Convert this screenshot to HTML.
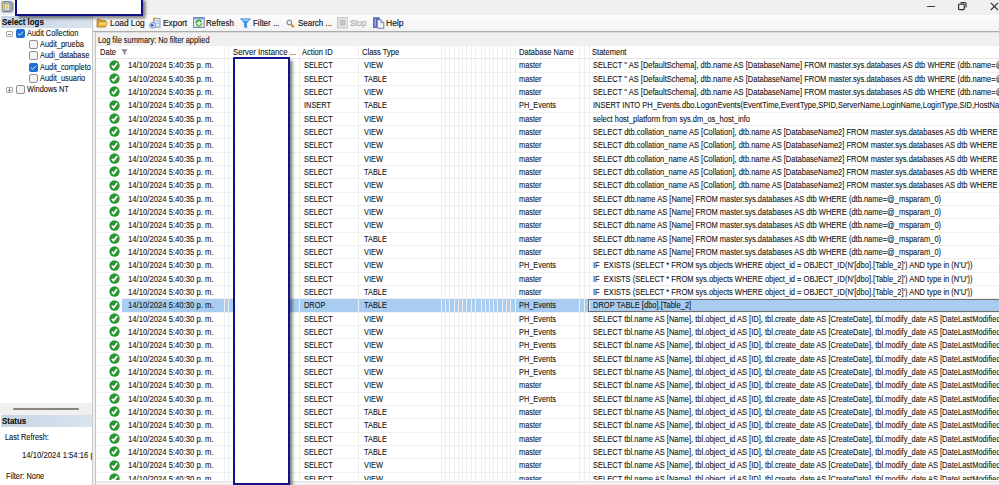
<!DOCTYPE html><html><head><meta charset="utf-8"><style>
*{box-sizing:border-box;margin:0;padding:0}
html,body{width:999px;height:485px;overflow:hidden;background:#f0f0f0;font-family:"Liberation Sans", sans-serif;color:#1e1e1e}
.a{position:absolute}
.t{position:absolute;white-space:pre;font-size:9px;line-height:10px;transform:scaleX(.82);transform-origin:0 0;color:#141414;-webkit-text-stroke-width:0.1px}
.d{transform:scaleX(.855)}
.s{transform:scaleX(.835)}
.tb{position:absolute;white-space:nowrap;font-size:9px;line-height:10px;color:#141414;transform:scaleX(.885);transform-origin:0 0;-webkit-text-stroke-width:0.15px}
</style></head><body><div class="a" style="left:0;top:0;width:999px;height:15px;background:#eff0f2"></div>
<svg class="a" style="left:0;top:0" width="15" height="14" viewBox="0 0 15 14">
<path d="M2.6 1.8 H10.6 L12.8 3.2 V10.6 L11.4 11.8 H2.6 Z" fill="#dfe7f2" stroke="#4f5d78" stroke-width="1"/>
<path d="M10.2 2.4 L12.2 3.6 V10.4 L10.2 11.2 Z" fill="#9aa7bd"/>
<rect x="4.2" y="3.3" width="5.6" height="6.9" fill="#eef1f7" stroke="#7d889c" stroke-width="0.8"/>
<rect x="5.6" y="4.2" width="2.8" height="4.6" fill="#f2cc4c"/>
<path d="M2 1.5 V12" stroke="#b9cbe6" stroke-width="0.8"/>
<g fill="#e4aa2a"><rect x="1" y="2.8" width="2.2" height="1.1"/><rect x="1" y="4.9" width="2.2" height="1.1"/><rect x="1" y="7" width="2.2" height="1.1"/><rect x="1" y="9.1" width="2.2" height="1.1"/></g>
</svg>
<div class="a" style="left:927px;top:5.5px;width:8px;height:1.2px;background:#3a3a3a"></div>
<svg class="a" style="left:957px;top:1px" width="11" height="10" viewBox="0 0 11 10"><rect x="1.6" y="3.1" width="5.6" height="5.6" rx="1" fill="none" stroke="#2e2e2e" stroke-width="1.2"/><path d="M3.6 1.6 H8 a1 1 0 0 1 1 1 V6.6" fill="none" stroke="#2e2e2e" stroke-width="1.2"/></svg>
<svg class="a" style="left:989px;top:1px" width="10" height="10" viewBox="0 0 10 10"><path d="M1.8 1.8 L9 9 M9 1.8 L1.8 9" stroke="#2e2e2e" stroke-width="1.1"/></svg>
<div class="a" style="left:0;top:15px;width:92px;height:470px;background:#fff"></div>
<div class="a" style="left:1px;top:16px;width:91px;height:12px;background:linear-gradient(90deg,#c6d4e4,#d9e4ef)"></div>
<div class="t" style="left:2.3px;top:16.6px;font-size:9.5px;font-weight:bold;transform:scaleX(.835);color:#0a0a0a">Select logs</div>
<div class="a" style="left:6.3px;top:31.00px;width:6.6px;height:6px;border:1px solid #a8a8a8;border-radius:1px;background:#fafafa"></div>
<div class="a" style="left:7.9px;top:33.50px;width:3.4px;height:1px;background:#7884c4"></div>
<div class="a" style="left:16.3px;top:29.0px;width:9px;height:9px;border-radius:2px;background:#1a6fd0"></div><svg class="a" style="left:16.3px;top:29.0px" width="9" height="9" viewBox="0 0 9 9"><path d="M2 4.6 L3.7 6.2 L7 2.8" fill="none" stroke="#fff" stroke-width="0.9"/></svg>
<div class="t" style="left:27px;top:28.00px">Audit Collection</div>
<div class="a" style="left:29.3px;top:40.2px;width:9px;height:9px;border-radius:1.5px;background:#f3f3f3;border:1px solid #8f8f8f;border-radius:2px"></div>
<div class="t" style="left:40.3px;top:39.20px">Audit_prueba</div>
<div class="a" style="left:29.3px;top:51.4px;width:9px;height:9px;border-radius:1.5px;background:#f3f3f3;border:1px solid #8f8f8f;border-radius:2px"></div>
<div class="t" style="left:40.3px;top:50.40px">Audi_database</div>
<div class="a" style="left:29.3px;top:62.6px;width:9px;height:9px;border-radius:2px;background:#1a6fd0"></div><svg class="a" style="left:29.3px;top:62.6px" width="9" height="9" viewBox="0 0 9 9"><path d="M2 4.6 L3.7 6.2 L7 2.8" fill="none" stroke="#fff" stroke-width="0.9"/></svg>
<div class="t" style="left:40.3px;top:61.60px">Audit_completo</div>
<div class="a" style="left:29.3px;top:73.8px;width:9px;height:9px;border-radius:1.5px;background:#f3f3f3;border:1px solid #8f8f8f;border-radius:2px"></div>
<div class="t" style="left:40.3px;top:72.80px">Audit_usuario</div>
<div class="a" style="left:6.3px;top:87.00px;width:6.6px;height:6px;border:1px solid #a8a8a8;border-radius:1px;background:#fafafa"></div>
<div class="a" style="left:7.9px;top:89.50px;width:3.4px;height:1px;background:#7884c4"></div>
<div class="a" style="left:9.1px;top:88.20px;width:1px;height:3.4px;background:#7884c4"></div>
<div class="a" style="left:16.3px;top:85.0px;width:9px;height:9px;border-radius:1.5px;background:#f3f3f3;border:1px solid #8f8f8f;border-radius:2px"></div>
<div class="t" style="left:27px;top:84.00px">Windows NT</div>
<div class="a" style="left:0;top:403px;width:92px;height:12px;background:#f0f0f0"></div>
<div class="a" style="left:13px;top:408.3px;width:66px;height:1.5px;background:#858585;border-radius:1px"></div>
<div class="a" style="left:1px;top:415px;width:91px;height:12px;background:linear-gradient(90deg,#c6d4e4,#d9e4ef)"></div>
<div class="t" style="left:2.4px;top:415.6px;font-size:9.5px;font-weight:bold;transform:scaleX(.835);color:#0a0a0a">Status</div>
<div class="t" style="left:4.5px;top:432px">Last Refresh:</div>
<div class="a" style="left:0;top:445px;width:92px;height:20px;overflow:hidden"><div class="t d" style="left:21.5px;top:4.5px">14/10/2024 1:54:16 p. m.</div></div>
<div class="t" style="left:5.7px;top:471px">Filter: None</div>
<div class="a" style="left:92px;top:15px;width:1px;height:470px;background:#c9c9c9"></div>
<div class="a" style="left:93px;top:15px;width:906px;height:17px;background:linear-gradient(#fcfcfc,#f3f3f3)"></div>
<div class="a" style="left:93px;top:31.3px;width:906px;height:1.2px;background:#acacac"></div>
<svg class="a" style="left:95.5px;top:18px" width="12" height="10" viewBox="0 0 12 10"><defs><linearGradient id="fg" x1="0" y1="0" x2="0" y2="1"><stop offset="0" stop-color="#ffe98a"/><stop offset="1" stop-color="#e9a81c"/></linearGradient></defs><path d="M1 1.2 H4 L5 2.3 H9.3 V8.8 H1 Z" fill="#d9a23a" stroke="#9a6a14" stroke-width="0.6"/><path d="M3 4 H11.5 L9.5 9 H0.8 Z" fill="url(#fg)" stroke="#a87216" stroke-width="0.6"/></svg>
<div class="tb" style="left:109.5px;top:17.5px;transform:scaleX(.925)">Load Log</div>
<svg class="a" style="left:149px;top:17px" width="12" height="12" viewBox="0 0 12 12"><rect x="4.6" y="1.3" width="6.4" height="8.8" fill="#e4ecf8" stroke="#6f85b5" stroke-width="0.8"/><path d="M6 3.5 H10 M6 5 H10 M6 6.5 H10" stroke="#9fb4dc" stroke-width="0.6"/><rect x="4.6" y="0.3" width="1.6" height="3" fill="#d9a82a"/><circle cx="3.6" cy="8.3" r="2.9" fill="#f4f7fd" stroke="#5a7bc4" stroke-width="0.9"/><path d="M5 8.3 H2.4 M3.6 6.9 L2.1 8.3 L3.6 9.7" fill="none" stroke="#1f4fbf" stroke-width="1.1"/></svg>
<div class="tb" style="left:163px;top:17.5px;transform:scaleX(.93)">Export</div>
<svg class="a" style="left:192.5px;top:17px" width="12" height="11" viewBox="0 0 12 11"><rect x="0.6" y="0.6" width="10.6" height="9.8" fill="#eef3fa" stroke="#5f7fb8" stroke-width="1"/><rect x="0.6" y="0.6" width="10.6" height="1.8" fill="#7ea2dc"/><path d="M3.2 6.2 A2.7 2.7 0 0 1 8.2 4.6" fill="none" stroke="#3a9a2a" stroke-width="1.6"/><path d="M8.6 6 A2.7 2.7 0 0 1 3.6 7.6" fill="none" stroke="#6cbf3a" stroke-width="1.6"/><path d="M7.2 3.4 L9 4.9 L7.2 5.6Z M4.6 8.8 L2.9 7.1 L4.7 6.6Z" fill="#3a9a2a"/></svg>
<div class="tb" style="left:206.4px;top:17.5px">Refresh</div>
<svg class="a" style="left:239.5px;top:18px" width="11" height="11" viewBox="0 0 11 11"><path d="M0.5 0.8 H10.5 L6.6 5 V10 L4.4 8.8 V5 Z" fill="#3a8ee8" stroke="#1f62c0" stroke-width="0.5"/><path d="M1.5 1.3 H9.5 L7.5 3 H3.5Z" fill="#9fd0ff"/></svg>
<div class="tb" style="left:253px;top:17.5px">Filter ...</div>
<svg class="a" style="left:285.5px;top:18.5px" width="9" height="10" viewBox="0 0 9 10"><circle cx="3.3" cy="3.5" r="2.4" fill="#e8f0f8" stroke="#707070" stroke-width="1"/><path d="M5 5.3 L7.8 8.2" stroke="#d4902c" stroke-width="2"/></svg>
<div class="tb" style="left:298.2px;top:17.5px">Search ...</div>
<svg class="a" style="left:336.5px;top:17.3px" width="11.5" height="11.5" viewBox="0 0 11.5 11.5"><rect x="0.6" y="0.6" width="10.3" height="10.3" fill="#e4e4e4" stroke="#c2c2c2" stroke-width="1"/><rect x="3.5" y="3.5" width="4.5" height="4.5" fill="#c8c8c8" stroke="#b0b0b0" stroke-width="0.6"/></svg>
<div class="tb" style="left:350px;top:17.5px;color:#a8a8a8">Stop</div>
<svg class="a" style="left:372.5px;top:17px" width="12" height="12" viewBox="0 0 12 12"><rect x="0.6" y="0.8" width="5.6" height="9.6" fill="#5d6cc0" stroke="#3f4a98" stroke-width="0.7"/><rect x="1.6" y="1.8" width="1.4" height="7.6" fill="#9aa6e6"/><path d="M4.2 2.8 H8 L10.8 5.6 V11.3 H4.2 Z" fill="#eef2fa" stroke="#5262a6" stroke-width="0.8"/><path d="M8 2.8 V5.6 H10.8" fill="#c7d2ee" stroke="#5262a6" stroke-width="0.6"/></svg>
<div class="tb" style="left:386px;top:17.5px;transform:scaleX(.95)">Help</div>
<div class="a" style="left:95px;top:32px;width:904px;height:453px;background:#fff;border-left:1px solid #c4c4c4;border-top:1px solid #dcdcdc"></div>
<div class="a" style="left:96px;top:33px;width:904px;height:12.5px;background:#f0f0f0"></div>
<div class="t" style="left:97.7px;top:35.3px">Log file summary: No filter applied</div>
<div class="t" style="left:99.5px;top:47.3px;transform:scaleX(.84)">Date</div>
<svg class="a" style="left:120.8px;top:48.5px" width="7" height="6" viewBox="0 0 7 6"><path d="M0.8 0.6 H6.2 L4 3.2 V5.6 L3 4.9 V3.2 Z" fill="#8c8c8c" stroke="#7a7a7a" stroke-width="0.5"/></svg>
<div class="t" style="left:233px;top:47.3px;transform:scaleX(.865)">Server Instance ...</div>
<div class="t" style="left:302.3px;top:47.3px;transform:scaleX(.84)">Action ID</div>
<div class="t" style="left:362px;top:47.3px;transform:scaleX(.84)">Class Type</div>
<div class="t" style="left:518.5px;top:47.3px;transform:scaleX(.84)">Database Name</div>
<div class="t" style="left:592px;top:47.3px;transform:scaleX(.84)">Statement</div>
<div class="a" style="left:96px;top:57.8px;width:904px;height:1px;background:#e6e6e6"></div>
<div class="a" style="left:96px;top:58.3px;width:903px;height:421.7px;overflow:hidden"><div class="a" style="left:-96px;top:-58.3px;width:999px;height:485px"><div class="a" style="left:96px;top:71.56333333333333px;width:904px;height:1px;background:#f0f0f0"></div><svg class="a" style="left:109.3px;top:59.73px" width="11" height="11" viewBox="0 0 11 11"><circle cx="5.5" cy="5.5" r="5.15" fill="#24972f"/><path d="M3 5.7 L4.6 7.8 L8.1 3.1" fill="none" stroke="#fff" stroke-width="1.8" stroke-linejoin="round"/></svg><div class="t d" style="left:128px;top:60.33px">14/10/2024 5:40:35 p. m.</div><div class="t" style="left:304px;top:60.33px">SELECT</div><div class="t" style="left:364px;top:60.33px">VIEW</div><div class="t" style="left:519px;top:60.33px">master</div><div class="t s" style="left:593px;top:60.33px">SELECT &#x27;&#x27; AS [DefaultSchema], dtb.name AS [DatabaseName] FROM master.sys.databases AS dtb WHERE (dtb.name=@_msparam_0)</div><div class="a" style="left:96px;top:84.89666666666666px;width:904px;height:1px;background:#f0f0f0"></div><svg class="a" style="left:109.3px;top:73.06333333333333px" width="11" height="11" viewBox="0 0 11 11"><circle cx="5.5" cy="5.5" r="5.15" fill="#24972f"/><path d="M3 5.7 L4.6 7.8 L8.1 3.1" fill="none" stroke="#fff" stroke-width="1.8" stroke-linejoin="round"/></svg><div class="t d" style="left:128px;top:73.66333333333333px">14/10/2024 5:40:35 p. m.</div><div class="t" style="left:304px;top:73.66333333333333px">SELECT</div><div class="t" style="left:364px;top:73.66333333333333px">TABLE</div><div class="t" style="left:519px;top:73.66333333333333px">master</div><div class="t s" style="left:593px;top:73.66333333333333px">SELECT &#x27;&#x27; AS [DefaultSchema], dtb.name AS [DatabaseName] FROM master.sys.databases AS dtb WHERE (dtb.name=@_msparam_0)</div><div class="a" style="left:96px;top:98.23px;width:904px;height:1px;background:#f0f0f0"></div><svg class="a" style="left:109.3px;top:86.39666666666668px" width="11" height="11" viewBox="0 0 11 11"><circle cx="5.5" cy="5.5" r="5.15" fill="#24972f"/><path d="M3 5.7 L4.6 7.8 L8.1 3.1" fill="none" stroke="#fff" stroke-width="1.8" stroke-linejoin="round"/></svg><div class="t d" style="left:128px;top:86.99666666666667px">14/10/2024 5:40:35 p. m.</div><div class="t" style="left:304px;top:86.99666666666667px">SELECT</div><div class="t" style="left:364px;top:86.99666666666667px">VIEW</div><div class="t" style="left:519px;top:86.99666666666667px">master</div><div class="t s" style="left:593px;top:86.99666666666667px">SELECT &#x27;&#x27; AS [DefaultSchema], dtb.name AS [DatabaseName] FROM master.sys.databases AS dtb WHERE (dtb.name=@_msparam_0)</div><div class="a" style="left:96px;top:111.56333333333333px;width:904px;height:1px;background:#f0f0f0"></div><svg class="a" style="left:109.3px;top:99.73px" width="11" height="11" viewBox="0 0 11 11"><circle cx="5.5" cy="5.5" r="5.15" fill="#24972f"/><path d="M3 5.7 L4.6 7.8 L8.1 3.1" fill="none" stroke="#fff" stroke-width="1.8" stroke-linejoin="round"/></svg><div class="t d" style="left:128px;top:100.33px">14/10/2024 5:40:35 p. m.</div><div class="t" style="left:304px;top:100.33px">INSERT</div><div class="t" style="left:364px;top:100.33px">TABLE</div><div class="t" style="left:519px;top:100.33px">PH_Events</div><div class="t s" style="left:593px;top:100.33px">INSERT INTO PH_Events.dbo.LogonEvents(EventTime,EventType,SPID,ServerName,LoginName,LoginType,SID,HostName)</div><div class="a" style="left:96px;top:124.89666666666666px;width:904px;height:1px;background:#f0f0f0"></div><svg class="a" style="left:109.3px;top:113.06333333333333px" width="11" height="11" viewBox="0 0 11 11"><circle cx="5.5" cy="5.5" r="5.15" fill="#24972f"/><path d="M3 5.7 L4.6 7.8 L8.1 3.1" fill="none" stroke="#fff" stroke-width="1.8" stroke-linejoin="round"/></svg><div class="t d" style="left:128px;top:113.66333333333333px">14/10/2024 5:40:35 p. m.</div><div class="t" style="left:304px;top:113.66333333333333px">SELECT</div><div class="t" style="left:364px;top:113.66333333333333px">VIEW</div><div class="t" style="left:519px;top:113.66333333333333px">master</div><div class="t s" style="left:593px;top:113.66333333333333px">select host_platform from sys.dm_os_host_info</div><div class="a" style="left:96px;top:138.23000000000002px;width:904px;height:1px;background:#f0f0f0"></div><svg class="a" style="left:109.3px;top:126.39666666666668px" width="11" height="11" viewBox="0 0 11 11"><circle cx="5.5" cy="5.5" r="5.15" fill="#24972f"/><path d="M3 5.7 L4.6 7.8 L8.1 3.1" fill="none" stroke="#fff" stroke-width="1.8" stroke-linejoin="round"/></svg><div class="t d" style="left:128px;top:126.99666666666667px">14/10/2024 5:40:35 p. m.</div><div class="t" style="left:304px;top:126.99666666666667px">SELECT</div><div class="t" style="left:364px;top:126.99666666666667px">VIEW</div><div class="t" style="left:519px;top:126.99666666666667px">master</div><div class="t s" style="left:593px;top:126.99666666666667px">SELECT dtb.collation_name AS [Collation], dtb.name AS [DatabaseName2] FROM master.sys.databases AS dtb WHERE (dtb.name=@_msparam_0)</div><div class="a" style="left:96px;top:151.56333333333333px;width:904px;height:1px;background:#f0f0f0"></div><svg class="a" style="left:109.3px;top:139.73px" width="11" height="11" viewBox="0 0 11 11"><circle cx="5.5" cy="5.5" r="5.15" fill="#24972f"/><path d="M3 5.7 L4.6 7.8 L8.1 3.1" fill="none" stroke="#fff" stroke-width="1.8" stroke-linejoin="round"/></svg><div class="t d" style="left:128px;top:140.32999999999998px">14/10/2024 5:40:35 p. m.</div><div class="t" style="left:304px;top:140.32999999999998px">SELECT</div><div class="t" style="left:364px;top:140.32999999999998px">VIEW</div><div class="t" style="left:519px;top:140.32999999999998px">master</div><div class="t s" style="left:593px;top:140.32999999999998px">SELECT dtb.collation_name AS [Collation], dtb.name AS [DatabaseName2] FROM master.sys.databases AS dtb WHERE (dtb.name=@_msparam_0)</div><div class="a" style="left:96px;top:164.8966666666667px;width:904px;height:1px;background:#f0f0f0"></div><svg class="a" style="left:109.3px;top:153.06333333333336px" width="11" height="11" viewBox="0 0 11 11"><circle cx="5.5" cy="5.5" r="5.15" fill="#24972f"/><path d="M3 5.7 L4.6 7.8 L8.1 3.1" fill="none" stroke="#fff" stroke-width="1.8" stroke-linejoin="round"/></svg><div class="t d" style="left:128px;top:153.66333333333336px">14/10/2024 5:40:35 p. m.</div><div class="t" style="left:304px;top:153.66333333333336px">SELECT</div><div class="t" style="left:364px;top:153.66333333333336px">VIEW</div><div class="t" style="left:519px;top:153.66333333333336px">master</div><div class="t s" style="left:593px;top:153.66333333333336px">SELECT dtb.collation_name AS [Collation], dtb.name AS [DatabaseName2] FROM master.sys.databases AS dtb WHERE (dtb.name=@_msparam_0)</div><div class="a" style="left:96px;top:178.23000000000002px;width:904px;height:1px;background:#f0f0f0"></div><svg class="a" style="left:109.3px;top:166.39666666666668px" width="11" height="11" viewBox="0 0 11 11"><circle cx="5.5" cy="5.5" r="5.15" fill="#24972f"/><path d="M3 5.7 L4.6 7.8 L8.1 3.1" fill="none" stroke="#fff" stroke-width="1.8" stroke-linejoin="round"/></svg><div class="t d" style="left:128px;top:166.99666666666667px">14/10/2024 5:40:35 p. m.</div><div class="t" style="left:304px;top:166.99666666666667px">SELECT</div><div class="t" style="left:364px;top:166.99666666666667px">TABLE</div><div class="t" style="left:519px;top:166.99666666666667px">master</div><div class="t s" style="left:593px;top:166.99666666666667px">SELECT dtb.collation_name AS [Collation], dtb.name AS [DatabaseName2] FROM master.sys.databases AS dtb WHERE (dtb.name=@_msparam_0)</div><div class="a" style="left:96px;top:191.56333333333333px;width:904px;height:1px;background:#f0f0f0"></div><svg class="a" style="left:109.3px;top:179.73px" width="11" height="11" viewBox="0 0 11 11"><circle cx="5.5" cy="5.5" r="5.15" fill="#24972f"/><path d="M3 5.7 L4.6 7.8 L8.1 3.1" fill="none" stroke="#fff" stroke-width="1.8" stroke-linejoin="round"/></svg><div class="t d" style="left:128px;top:180.32999999999998px">14/10/2024 5:40:35 p. m.</div><div class="t" style="left:304px;top:180.32999999999998px">SELECT</div><div class="t" style="left:364px;top:180.32999999999998px">VIEW</div><div class="t" style="left:519px;top:180.32999999999998px">master</div><div class="t s" style="left:593px;top:180.32999999999998px">SELECT dtb.collation_name AS [Collation], dtb.name AS [DatabaseName2] FROM master.sys.databases AS dtb WHERE (dtb.name=@_msparam_0)</div><div class="a" style="left:96px;top:204.8966666666667px;width:904px;height:1px;background:#f0f0f0"></div><svg class="a" style="left:109.3px;top:193.06333333333336px" width="11" height="11" viewBox="0 0 11 11"><circle cx="5.5" cy="5.5" r="5.15" fill="#24972f"/><path d="M3 5.7 L4.6 7.8 L8.1 3.1" fill="none" stroke="#fff" stroke-width="1.8" stroke-linejoin="round"/></svg><div class="t d" style="left:128px;top:193.66333333333336px">14/10/2024 5:40:35 p. m.</div><div class="t" style="left:304px;top:193.66333333333336px">SELECT</div><div class="t" style="left:364px;top:193.66333333333336px">VIEW</div><div class="t" style="left:519px;top:193.66333333333336px">master</div><div class="t s" style="left:593px;top:193.66333333333336px">SELECT dtb.name AS [Name] FROM master.sys.databases AS dtb WHERE (dtb.name=@_msparam_0)</div><div class="a" style="left:96px;top:218.23000000000002px;width:904px;height:1px;background:#f0f0f0"></div><svg class="a" style="left:109.3px;top:206.39666666666668px" width="11" height="11" viewBox="0 0 11 11"><circle cx="5.5" cy="5.5" r="5.15" fill="#24972f"/><path d="M3 5.7 L4.6 7.8 L8.1 3.1" fill="none" stroke="#fff" stroke-width="1.8" stroke-linejoin="round"/></svg><div class="t d" style="left:128px;top:206.99666666666667px">14/10/2024 5:40:35 p. m.</div><div class="t" style="left:304px;top:206.99666666666667px">SELECT</div><div class="t" style="left:364px;top:206.99666666666667px">VIEW</div><div class="t" style="left:519px;top:206.99666666666667px">master</div><div class="t s" style="left:593px;top:206.99666666666667px">SELECT dtb.name AS [Name] FROM master.sys.databases AS dtb WHERE (dtb.name=@_msparam_0)</div><div class="a" style="left:96px;top:231.56333333333333px;width:904px;height:1px;background:#f0f0f0"></div><svg class="a" style="left:109.3px;top:219.73px" width="11" height="11" viewBox="0 0 11 11"><circle cx="5.5" cy="5.5" r="5.15" fill="#24972f"/><path d="M3 5.7 L4.6 7.8 L8.1 3.1" fill="none" stroke="#fff" stroke-width="1.8" stroke-linejoin="round"/></svg><div class="t d" style="left:128px;top:220.32999999999998px">14/10/2024 5:40:35 p. m.</div><div class="t" style="left:304px;top:220.32999999999998px">SELECT</div><div class="t" style="left:364px;top:220.32999999999998px">VIEW</div><div class="t" style="left:519px;top:220.32999999999998px">master</div><div class="t s" style="left:593px;top:220.32999999999998px">SELECT dtb.name AS [Name] FROM master.sys.databases AS dtb WHERE (dtb.name=@_msparam_0)</div><div class="a" style="left:96px;top:244.8966666666667px;width:904px;height:1px;background:#f0f0f0"></div><svg class="a" style="left:109.3px;top:233.06333333333336px" width="11" height="11" viewBox="0 0 11 11"><circle cx="5.5" cy="5.5" r="5.15" fill="#24972f"/><path d="M3 5.7 L4.6 7.8 L8.1 3.1" fill="none" stroke="#fff" stroke-width="1.8" stroke-linejoin="round"/></svg><div class="t d" style="left:128px;top:233.66333333333336px">14/10/2024 5:40:35 p. m.</div><div class="t" style="left:304px;top:233.66333333333336px">SELECT</div><div class="t" style="left:364px;top:233.66333333333336px">TABLE</div><div class="t" style="left:519px;top:233.66333333333336px">master</div><div class="t s" style="left:593px;top:233.66333333333336px">SELECT dtb.name AS [Name] FROM master.sys.databases AS dtb WHERE (dtb.name=@_msparam_0)</div><div class="a" style="left:96px;top:258.22999999999996px;width:904px;height:1px;background:#f0f0f0"></div><svg class="a" style="left:109.3px;top:246.39666666666668px" width="11" height="11" viewBox="0 0 11 11"><circle cx="5.5" cy="5.5" r="5.15" fill="#24972f"/><path d="M3 5.7 L4.6 7.8 L8.1 3.1" fill="none" stroke="#fff" stroke-width="1.8" stroke-linejoin="round"/></svg><div class="t d" style="left:128px;top:246.99666666666667px">14/10/2024 5:40:35 p. m.</div><div class="t" style="left:304px;top:246.99666666666667px">SELECT</div><div class="t" style="left:364px;top:246.99666666666667px">VIEW</div><div class="t" style="left:519px;top:246.99666666666667px">master</div><div class="t s" style="left:593px;top:246.99666666666667px">SELECT dtb.name AS [Name] FROM master.sys.databases AS dtb WHERE (dtb.name=@_msparam_0)</div><div class="a" style="left:96px;top:271.5633333333333px;width:904px;height:1px;background:#f0f0f0"></div><svg class="a" style="left:109.3px;top:259.72999999999996px" width="11" height="11" viewBox="0 0 11 11"><circle cx="5.5" cy="5.5" r="5.15" fill="#24972f"/><path d="M3 5.7 L4.6 7.8 L8.1 3.1" fill="none" stroke="#fff" stroke-width="1.8" stroke-linejoin="round"/></svg><div class="t d" style="left:128px;top:260.33px">14/10/2024 5:40:30 p. m.</div><div class="t" style="left:304px;top:260.33px">SELECT</div><div class="t" style="left:364px;top:260.33px">VIEW</div><div class="t" style="left:519px;top:260.33px">PH_Events</div><div class="t s" style="left:593px;top:260.33px">IF  EXISTS (SELECT * FROM sys.objects WHERE object_id = OBJECT_ID(N&#x27;[dbo].[Table_2]&#x27;) AND type in (N&#x27;U&#x27;))</div><div class="a" style="left:96px;top:284.89666666666665px;width:904px;height:1px;background:#f0f0f0"></div><svg class="a" style="left:109.3px;top:273.06333333333333px" width="11" height="11" viewBox="0 0 11 11"><circle cx="5.5" cy="5.5" r="5.15" fill="#24972f"/><path d="M3 5.7 L4.6 7.8 L8.1 3.1" fill="none" stroke="#fff" stroke-width="1.8" stroke-linejoin="round"/></svg><div class="t d" style="left:128px;top:273.66333333333336px">14/10/2024 5:40:30 p. m.</div><div class="t" style="left:304px;top:273.66333333333336px">SELECT</div><div class="t" style="left:364px;top:273.66333333333336px">VIEW</div><div class="t" style="left:519px;top:273.66333333333336px">master</div><div class="t s" style="left:593px;top:273.66333333333336px">IF  EXISTS (SELECT * FROM sys.objects WHERE object_id = OBJECT_ID(N&#x27;[dbo].[Table_2]&#x27;) AND type in (N&#x27;U&#x27;))</div><div class="a" style="left:96px;top:298.22999999999996px;width:904px;height:1px;background:#f0f0f0"></div><svg class="a" style="left:109.3px;top:286.39666666666665px" width="11" height="11" viewBox="0 0 11 11"><circle cx="5.5" cy="5.5" r="5.15" fill="#24972f"/><path d="M3 5.7 L4.6 7.8 L8.1 3.1" fill="none" stroke="#fff" stroke-width="1.8" stroke-linejoin="round"/></svg><div class="t d" style="left:128px;top:286.99666666666667px">14/10/2024 5:40:30 p. m.</div><div class="t" style="left:304px;top:286.99666666666667px">SELECT</div><div class="t" style="left:364px;top:286.99666666666667px">TABLE</div><div class="t" style="left:519px;top:286.99666666666667px">master</div><div class="t s" style="left:593px;top:286.99666666666667px">IF  EXISTS (SELECT * FROM sys.objects WHERE object_id = OBJECT_ID(N&#x27;[dbo].[Table_2]&#x27;) AND type in (N&#x27;U&#x27;))</div><div class="a" style="left:122px;top:298.93px;width:877px;height:13.333333333333334px;background:#a8cdf0"></div><div class="a" style="left:96px;top:311.5633333333333px;width:904px;height:1px;background:#f0f0f0"></div><svg class="a" style="left:109.3px;top:299.72999999999996px" width="11" height="11" viewBox="0 0 11 11"><circle cx="5.5" cy="5.5" r="5.15" fill="#24972f"/><path d="M3 5.7 L4.6 7.8 L8.1 3.1" fill="none" stroke="#fff" stroke-width="1.8" stroke-linejoin="round"/></svg><div class="t d" style="left:128px;top:300.33px">14/10/2024 5:40:30 p. m.</div><div class="t" style="left:304px;top:300.33px">DROP</div><div class="t" style="left:364px;top:300.33px">TABLE</div><div class="t" style="left:519px;top:300.33px">PH_Events</div><div class="t s" style="left:593px;top:300.33px">DROP TABLE [dbo].[Table_2]</div><div class="a" style="left:96px;top:324.89666666666665px;width:904px;height:1px;background:#f0f0f0"></div><svg class="a" style="left:109.3px;top:313.06333333333333px" width="11" height="11" viewBox="0 0 11 11"><circle cx="5.5" cy="5.5" r="5.15" fill="#24972f"/><path d="M3 5.7 L4.6 7.8 L8.1 3.1" fill="none" stroke="#fff" stroke-width="1.8" stroke-linejoin="round"/></svg><div class="t d" style="left:128px;top:313.66333333333336px">14/10/2024 5:40:30 p. m.</div><div class="t" style="left:304px;top:313.66333333333336px">SELECT</div><div class="t" style="left:364px;top:313.66333333333336px">VIEW</div><div class="t" style="left:519px;top:313.66333333333336px">PH_Events</div><div class="t s" style="left:593px;top:313.66333333333336px">SELECT tbl.name AS [Name], tbl.object_id AS [ID], tbl.create_date AS [CreateDate], tbl.modify_date AS [DateLastModified]</div><div class="a" style="left:96px;top:338.22999999999996px;width:904px;height:1px;background:#f0f0f0"></div><svg class="a" style="left:109.3px;top:326.39666666666665px" width="11" height="11" viewBox="0 0 11 11"><circle cx="5.5" cy="5.5" r="5.15" fill="#24972f"/><path d="M3 5.7 L4.6 7.8 L8.1 3.1" fill="none" stroke="#fff" stroke-width="1.8" stroke-linejoin="round"/></svg><div class="t d" style="left:128px;top:326.99666666666667px">14/10/2024 5:40:30 p. m.</div><div class="t" style="left:304px;top:326.99666666666667px">SELECT</div><div class="t" style="left:364px;top:326.99666666666667px">VIEW</div><div class="t" style="left:519px;top:326.99666666666667px">PH_Events</div><div class="t s" style="left:593px;top:326.99666666666667px">SELECT tbl.name AS [Name], tbl.object_id AS [ID], tbl.create_date AS [CreateDate], tbl.modify_date AS [DateLastModified]</div><div class="a" style="left:96px;top:351.5633333333333px;width:904px;height:1px;background:#f0f0f0"></div><svg class="a" style="left:109.3px;top:339.72999999999996px" width="11" height="11" viewBox="0 0 11 11"><circle cx="5.5" cy="5.5" r="5.15" fill="#24972f"/><path d="M3 5.7 L4.6 7.8 L8.1 3.1" fill="none" stroke="#fff" stroke-width="1.8" stroke-linejoin="round"/></svg><div class="t d" style="left:128px;top:340.33px">14/10/2024 5:40:30 p. m.</div><div class="t" style="left:304px;top:340.33px">SELECT</div><div class="t" style="left:364px;top:340.33px">VIEW</div><div class="t" style="left:519px;top:340.33px">PH_Events</div><div class="t s" style="left:593px;top:340.33px">SELECT tbl.name AS [Name], tbl.object_id AS [ID], tbl.create_date AS [CreateDate], tbl.modify_date AS [DateLastModified]</div><div class="a" style="left:96px;top:364.89666666666665px;width:904px;height:1px;background:#f0f0f0"></div><svg class="a" style="left:109.3px;top:353.06333333333333px" width="11" height="11" viewBox="0 0 11 11"><circle cx="5.5" cy="5.5" r="5.15" fill="#24972f"/><path d="M3 5.7 L4.6 7.8 L8.1 3.1" fill="none" stroke="#fff" stroke-width="1.8" stroke-linejoin="round"/></svg><div class="t d" style="left:128px;top:353.66333333333336px">14/10/2024 5:40:30 p. m.</div><div class="t" style="left:304px;top:353.66333333333336px">SELECT</div><div class="t" style="left:364px;top:353.66333333333336px">VIEW</div><div class="t" style="left:519px;top:353.66333333333336px">PH_Events</div><div class="t s" style="left:593px;top:353.66333333333336px">SELECT tbl.name AS [Name], tbl.object_id AS [ID], tbl.create_date AS [CreateDate], tbl.modify_date AS [DateLastModified]</div><div class="a" style="left:96px;top:378.22999999999996px;width:904px;height:1px;background:#f0f0f0"></div><svg class="a" style="left:109.3px;top:366.39666666666665px" width="11" height="11" viewBox="0 0 11 11"><circle cx="5.5" cy="5.5" r="5.15" fill="#24972f"/><path d="M3 5.7 L4.6 7.8 L8.1 3.1" fill="none" stroke="#fff" stroke-width="1.8" stroke-linejoin="round"/></svg><div class="t d" style="left:128px;top:366.99666666666667px">14/10/2024 5:40:30 p. m.</div><div class="t" style="left:304px;top:366.99666666666667px">SELECT</div><div class="t" style="left:364px;top:366.99666666666667px">VIEW</div><div class="t" style="left:519px;top:366.99666666666667px">PH_Events</div><div class="t s" style="left:593px;top:366.99666666666667px">SELECT tbl.name AS [Name], tbl.object_id AS [ID], tbl.create_date AS [CreateDate], tbl.modify_date AS [DateLastModified]</div><div class="a" style="left:96px;top:391.5633333333333px;width:904px;height:1px;background:#f0f0f0"></div><svg class="a" style="left:109.3px;top:379.72999999999996px" width="11" height="11" viewBox="0 0 11 11"><circle cx="5.5" cy="5.5" r="5.15" fill="#24972f"/><path d="M3 5.7 L4.6 7.8 L8.1 3.1" fill="none" stroke="#fff" stroke-width="1.8" stroke-linejoin="round"/></svg><div class="t d" style="left:128px;top:380.33px">14/10/2024 5:40:30 p. m.</div><div class="t" style="left:304px;top:380.33px">SELECT</div><div class="t" style="left:364px;top:380.33px">VIEW</div><div class="t" style="left:519px;top:380.33px">master</div><div class="t s" style="left:593px;top:380.33px">SELECT tbl.name AS [Name], tbl.object_id AS [ID], tbl.create_date AS [CreateDate], tbl.modify_date AS [DateLastModified]</div><div class="a" style="left:96px;top:404.89666666666665px;width:904px;height:1px;background:#f0f0f0"></div><svg class="a" style="left:109.3px;top:393.06333333333333px" width="11" height="11" viewBox="0 0 11 11"><circle cx="5.5" cy="5.5" r="5.15" fill="#24972f"/><path d="M3 5.7 L4.6 7.8 L8.1 3.1" fill="none" stroke="#fff" stroke-width="1.8" stroke-linejoin="round"/></svg><div class="t d" style="left:128px;top:393.66333333333336px">14/10/2024 5:40:30 p. m.</div><div class="t" style="left:304px;top:393.66333333333336px">SELECT</div><div class="t" style="left:364px;top:393.66333333333336px">VIEW</div><div class="t" style="left:519px;top:393.66333333333336px">PH_Events</div><div class="t s" style="left:593px;top:393.66333333333336px">SELECT tbl.name AS [Name], tbl.object_id AS [ID], tbl.create_date AS [CreateDate], tbl.modify_date AS [DateLastModified]</div><div class="a" style="left:96px;top:418.22999999999996px;width:904px;height:1px;background:#f0f0f0"></div><svg class="a" style="left:109.3px;top:406.39666666666665px" width="11" height="11" viewBox="0 0 11 11"><circle cx="5.5" cy="5.5" r="5.15" fill="#24972f"/><path d="M3 5.7 L4.6 7.8 L8.1 3.1" fill="none" stroke="#fff" stroke-width="1.8" stroke-linejoin="round"/></svg><div class="t d" style="left:128px;top:406.99666666666667px">14/10/2024 5:40:30 p. m.</div><div class="t" style="left:304px;top:406.99666666666667px">SELECT</div><div class="t" style="left:364px;top:406.99666666666667px">TABLE</div><div class="t" style="left:519px;top:406.99666666666667px">master</div><div class="t s" style="left:593px;top:406.99666666666667px">SELECT tbl.name AS [Name], tbl.object_id AS [ID], tbl.create_date AS [CreateDate], tbl.modify_date AS [DateLastModified]</div><div class="a" style="left:96px;top:431.5633333333333px;width:904px;height:1px;background:#f0f0f0"></div><svg class="a" style="left:109.3px;top:419.72999999999996px" width="11" height="11" viewBox="0 0 11 11"><circle cx="5.5" cy="5.5" r="5.15" fill="#24972f"/><path d="M3 5.7 L4.6 7.8 L8.1 3.1" fill="none" stroke="#fff" stroke-width="1.8" stroke-linejoin="round"/></svg><div class="t d" style="left:128px;top:420.33px">14/10/2024 5:40:30 p. m.</div><div class="t" style="left:304px;top:420.33px">SELECT</div><div class="t" style="left:364px;top:420.33px">TABLE</div><div class="t" style="left:519px;top:420.33px">master</div><div class="t s" style="left:593px;top:420.33px">SELECT tbl.name AS [Name], tbl.object_id AS [ID], tbl.create_date AS [CreateDate], tbl.modify_date AS [DateLastModified]</div><div class="a" style="left:96px;top:444.89666666666665px;width:904px;height:1px;background:#f0f0f0"></div><svg class="a" style="left:109.3px;top:433.06333333333333px" width="11" height="11" viewBox="0 0 11 11"><circle cx="5.5" cy="5.5" r="5.15" fill="#24972f"/><path d="M3 5.7 L4.6 7.8 L8.1 3.1" fill="none" stroke="#fff" stroke-width="1.8" stroke-linejoin="round"/></svg><div class="t d" style="left:128px;top:433.66333333333336px">14/10/2024 5:40:30 p. m.</div><div class="t" style="left:304px;top:433.66333333333336px">SELECT</div><div class="t" style="left:364px;top:433.66333333333336px">TABLE</div><div class="t" style="left:519px;top:433.66333333333336px">master</div><div class="t s" style="left:593px;top:433.66333333333336px">SELECT tbl.name AS [Name], tbl.object_id AS [ID], tbl.create_date AS [CreateDate], tbl.modify_date AS [DateLastModified]</div><div class="a" style="left:96px;top:458.22999999999996px;width:904px;height:1px;background:#f0f0f0"></div><svg class="a" style="left:109.3px;top:446.39666666666665px" width="11" height="11" viewBox="0 0 11 11"><circle cx="5.5" cy="5.5" r="5.15" fill="#24972f"/><path d="M3 5.7 L4.6 7.8 L8.1 3.1" fill="none" stroke="#fff" stroke-width="1.8" stroke-linejoin="round"/></svg><div class="t d" style="left:128px;top:446.99666666666667px">14/10/2024 5:40:30 p. m.</div><div class="t" style="left:304px;top:446.99666666666667px">SELECT</div><div class="t" style="left:364px;top:446.99666666666667px">TABLE</div><div class="t" style="left:519px;top:446.99666666666667px">master</div><div class="t s" style="left:593px;top:446.99666666666667px">SELECT tbl.name AS [Name], tbl.object_id AS [ID], tbl.create_date AS [CreateDate], tbl.modify_date AS [DateLastModified]</div><div class="a" style="left:96px;top:471.5633333333333px;width:904px;height:1px;background:#f0f0f0"></div><svg class="a" style="left:109.3px;top:459.72999999999996px" width="11" height="11" viewBox="0 0 11 11"><circle cx="5.5" cy="5.5" r="5.15" fill="#24972f"/><path d="M3 5.7 L4.6 7.8 L8.1 3.1" fill="none" stroke="#fff" stroke-width="1.8" stroke-linejoin="round"/></svg><div class="t d" style="left:128px;top:460.33px">14/10/2024 5:40:30 p. m.</div><div class="t" style="left:304px;top:460.33px">SELECT</div><div class="t" style="left:364px;top:460.33px">VIEW</div><div class="t" style="left:519px;top:460.33px">master</div><div class="t s" style="left:593px;top:460.33px">SELECT tbl.name AS [Name], tbl.object_id AS [ID], tbl.create_date AS [CreateDate], tbl.modify_date AS [DateLastModified]</div><div class="a" style="left:96px;top:484.89666666666665px;width:904px;height:1px;background:#f0f0f0"></div><svg class="a" style="left:109.3px;top:473.06333333333333px" width="11" height="11" viewBox="0 0 11 11"><circle cx="5.5" cy="5.5" r="5.15" fill="#24972f"/><path d="M3 5.7 L4.6 7.8 L8.1 3.1" fill="none" stroke="#fff" stroke-width="1.8" stroke-linejoin="round"/></svg><div class="t d" style="left:128px;top:473.66333333333336px">14/10/2024 5:40:30 p. m.</div><div class="t" style="left:304px;top:473.66333333333336px">SELECT</div><div class="t" style="left:364px;top:473.66333333333336px">VIEW</div><div class="t" style="left:519px;top:473.66333333333336px">master</div><div class="t s" style="left:593px;top:473.66333333333336px">SELECT tbl.name AS [Name], tbl.object_id AS [ID], tbl.create_date AS [CreateDate], tbl.modify_date AS [DateLastModified]</div></div></div>
<div class="a" style="left:224.40px;top:45.5px;width:1px;height:435px;background:#eeeeee"></div>
<div class="a" style="left:228.10px;top:45.5px;width:1px;height:435px;background:#eeeeee"></div>
<div class="a" style="left:298.70px;top:45.5px;width:1px;height:435px;background:#eeeeee"></div>
<div class="a" style="left:358.30px;top:45.5px;width:1px;height:435px;background:#eeeeee"></div>
<div class="a" style="left:441.00px;top:45.5px;width:1px;height:435px;background:#eeeeee"></div>
<div class="a" style="left:445.20px;top:45.5px;width:1px;height:435px;background:#eeeeee"></div>
<div class="a" style="left:449.00px;top:45.5px;width:1px;height:435px;background:#eeeeee"></div>
<div class="a" style="left:453.60px;top:45.5px;width:1px;height:435px;background:#eeeeee"></div>
<div class="a" style="left:457.80px;top:45.5px;width:1px;height:435px;background:#eeeeee"></div>
<div class="a" style="left:462.00px;top:45.5px;width:1px;height:435px;background:#eeeeee"></div>
<div class="a" style="left:466.30px;top:45.5px;width:1px;height:435px;background:#eeeeee"></div>
<div class="a" style="left:470.50px;top:45.5px;width:1px;height:435px;background:#eeeeee"></div>
<div class="a" style="left:474.70px;top:45.5px;width:1px;height:435px;background:#eeeeee"></div>
<div class="a" style="left:480.50px;top:45.5px;width:1px;height:435px;background:#eeeeee"></div>
<div class="a" style="left:484.70px;top:45.5px;width:1px;height:435px;background:#eeeeee"></div>
<div class="a" style="left:488.50px;top:45.5px;width:1px;height:435px;background:#eeeeee"></div>
<div class="a" style="left:493.10px;top:45.5px;width:1px;height:435px;background:#eeeeee"></div>
<div class="a" style="left:497.30px;top:45.5px;width:1px;height:435px;background:#eeeeee"></div>
<div class="a" style="left:501.50px;top:45.5px;width:1px;height:435px;background:#eeeeee"></div>
<div class="a" style="left:505.70px;top:45.5px;width:1px;height:435px;background:#eeeeee"></div>
<div class="a" style="left:510.00px;top:45.5px;width:1px;height:435px;background:#eeeeee"></div>
<div class="a" style="left:514.60px;top:45.5px;width:1px;height:435px;background:#eeeeee"></div>
<div class="a" style="left:579.20px;top:45.5px;width:1px;height:435px;background:#eeeeee"></div>
<div class="a" style="left:583.70px;top:45.5px;width:1px;height:435px;background:#eeeeee"></div>
<div class="a" style="left:588.50px;top:45.5px;width:1px;height:435px;background:#eeeeee"></div>
<div class="a" style="left:588.2px;top:298.9px;width:420px;height:13.3px;border:1px solid #6e6e6e"></div>
<div class="a" style="left:96px;top:480.5px;width:904px;height:5px;background:#f0f0f0;border-top:1px solid #e4e4e4"></div>
<div class="a" style="left:232.6px;top:56.8px;width:57.2px;height:428.4px;background:#fff;border:2px solid #12128a;box-shadow:2.5px 2.5px 3px rgba(0,0,0,.5)"></div>
<div class="a" style="left:15.3px;top:-3px;width:127.7px;height:18.8px;background:#fff;border:2px solid #12128a;box-shadow:2.5px 2.5px 3px rgba(0,0,0,.5)"></div></body></html>
